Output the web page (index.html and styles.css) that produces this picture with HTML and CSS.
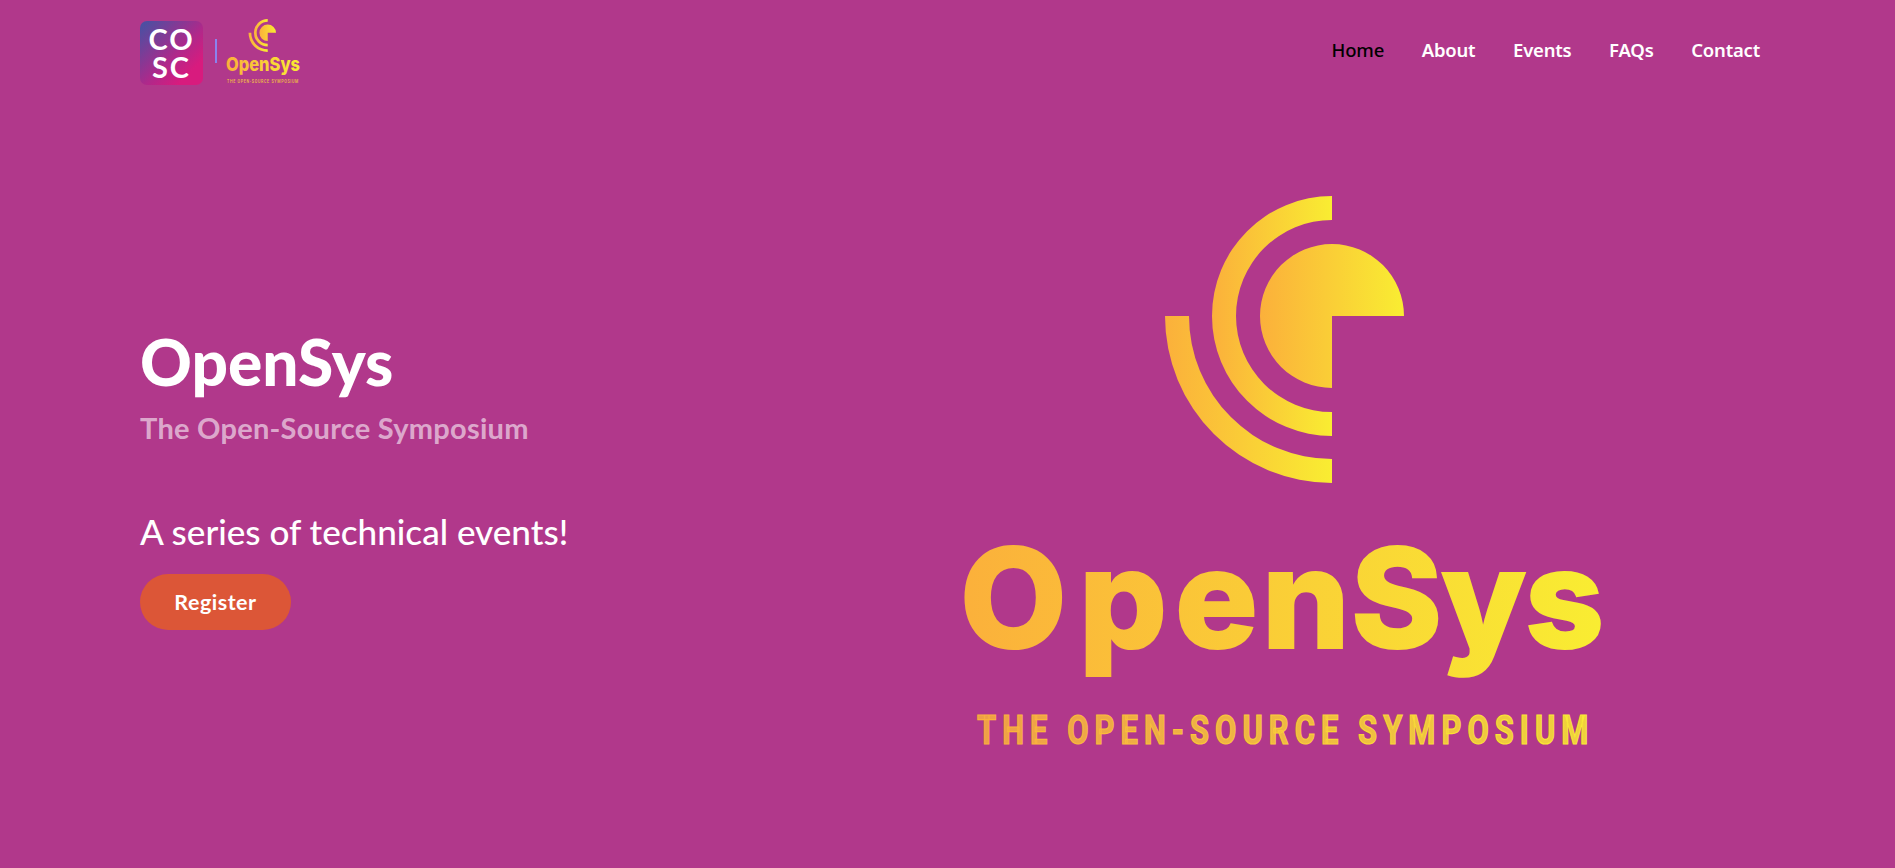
FILE: index.html
```html
<!DOCTYPE html>
<html lang="en">
<head>
<meta charset="utf-8">
<title>OpenSys</title>
<link rel="stylesheet" href="styles.css">
</head>
<body>
<svg class="defs" width="0" height="0" aria-hidden="true">
  <defs>
    <linearGradient id="sun"><stop offset="0" stop-color="#fbb03b"/><stop offset="1" stop-color="#f9ed32"/></linearGradient>
    <linearGradient id="sunDim"><stop offset="0" stop-color="#ee9f48"/><stop offset="1" stop-color="#efd23c"/></linearGradient>
    <symbol id="mark" viewBox="0 0 239 287" overflow="visible">
      <path fill="url(#sun)" d="M167 48A72 72 0 1 0 167 192V120H239A72 72 0 0 0 167 48Z"/>
      <path fill="url(#sun)" d="M167 0A120 120 0 0 0 167 240V216A96 96 0 0 1 167 24Z"/>
      <path fill="url(#sun)" d="M0 120A167 167 0 0 0 167 287V263A143 143 0 0 1 24 120Z"/>
    </symbol>
  </defs>
</svg>
<div class="page">
  <header class="topbar">
    <a class="brand" href="#">
      <span class="cosc"><span class="cosc-text">CO<br>SC</span></span>
      <span class="brand-rule"></span>
      <svg class="brand-sys" viewBox="0 0 76 68" width="76" height="68">
        <use href="#mark" x="22.5" y="0" width="27.5" height="33"/>
        <text class="sys-word" x="0" y="52" textLength="74" lengthAdjust="spacingAndGlyphs">OpenSys</text>
        <text class="sys-tag" x="1" y="64" textLength="72" lengthAdjust="spacingAndGlyphs">THE OPEN-SOURCE SYMPOSIUM</text>
      </svg>
    </a>
    <nav class="nav">
      <a class="nav-link is-active" href="#">Home</a>
      <a class="nav-link" href="#">About</a>
      <a class="nav-link" href="#">Events</a>
      <a class="nav-link" href="#">FAQs</a>
      <a class="nav-link" href="#">Contact</a>
    </nav>
  </header>
  <main class="hero">
    <section class="hero-copy">
      <h1 class="hero-title">OpenSys</h1>
      <h2 class="hero-sub">The Open-Source Symposium</h2>
      <p class="hero-tag">A series of technical events!</p>
      <a class="register" href="#">Register</a>
    </section>
    <div class="hero-art">
      <svg class="hero-logo" viewBox="0 0 680 600" width="680" height="600">
        <use href="#mark" x="222" y="26" width="239" height="287"/>
        <text class="logo-word" x="17 136 232 319 408 498 582" y="478">OpenSys</text>
        <text class="logo-tag" transform="translate(34 574) scale(.68 1)" textLength="908" lengthAdjust="spacingAndGlyphs">THE OPEN-SOURCE SYMPOSIUM</text>
      </svg>
    </div>
  </main>
</div>
</body>
</html>
```
FILE: styles.css
```css
* { box-sizing: border-box; }
html, body { margin: 0; height: 100%; }
body {
  background: #b1388b;
  color: #fff;
  font-family: "Lato", "Noto Sans", sans-serif;
  overflow: hidden;
}
a { color: inherit; text-decoration: none; }
.defs { position: absolute; }
.page { width: 1620px; margin-left: 140px; }

.topbar {
  height: 100px;
  display: flex;
  align-items: flex-start;
  justify-content: space-between;
}
.brand { display: flex; align-items: center; padding-top: 19px; }
.cosc {
  width: 63px;
  height: 64px;
  border-radius: 7px;
  background: linear-gradient(135deg, #4c4fa2 5%, #b0288a 55%, #d81b7e 80%);
  display: flex;
  align-items: center;
  justify-content: center;
}
.cosc-text { font: 700 29px/28px "Lato", sans-serif; letter-spacing: 2px; text-align: center; }
.brand-rule { width: 2px; height: 24px; margin: 0 9px 4px 12px; background: #8a83ee; }
.brand-sys { overflow: visible; align-self: flex-start; }
.sys-word { font: 800 19px "Inter", sans-serif; fill: url(#sun); }
.sys-tag { font: 500 5.5px "Roboto", sans-serif; letter-spacing: 1px; fill: #f4c13f; }

.nav { display: flex; gap: 37.6px; padding-top: 36px; }
.nav-link { font: 600 18.5px/28px "Noto Sans", sans-serif; color: #fff; letter-spacing: -0.2px; }
.nav-link.is-active { color: #000; font-weight: 500; }

.hero {
  display: grid;
  grid-template-columns: 666px 1fr;
  height: 740px;
}
.hero-copy { align-self: center; padding-top: 16px; }
.hero-title { margin: 0 0 10px; font: 900 64px/72px "Lato", sans-serif; }
.hero-sub { margin: 0; font: 700 29px/40px "Lato", sans-serif; color: rgba(255, 255, 255, .58); letter-spacing: .25px; }
.hero-tag { margin: 58px 0 0; font: 500 35.1px/50px "Lato", sans-serif; }
.register {
  display: inline-block;
  width: 151px;
  height: 56px;
  margin-top: 18px;
  border-radius: 28px;
  background: #dc5637;
  font: 700 21.5px/56px "Lato", sans-serif;
  letter-spacing: .5px;
  text-align: center;
}
.hero-art { display: flex; justify-content: center; align-items: center; }
.hero-logo { display: block; }
.logo-word {
  font: 800 138px "Inter", sans-serif;
  fill: url(#sun);
  stroke: url(#sun);
  stroke-width: 2px;
}
.logo-tag {
  font: 700 41px "Roboto", sans-serif;
  letter-spacing: 8px;
  fill: url(#sunDim);
  stroke: url(#sun);
  stroke-width: 1.2px;
}
```
